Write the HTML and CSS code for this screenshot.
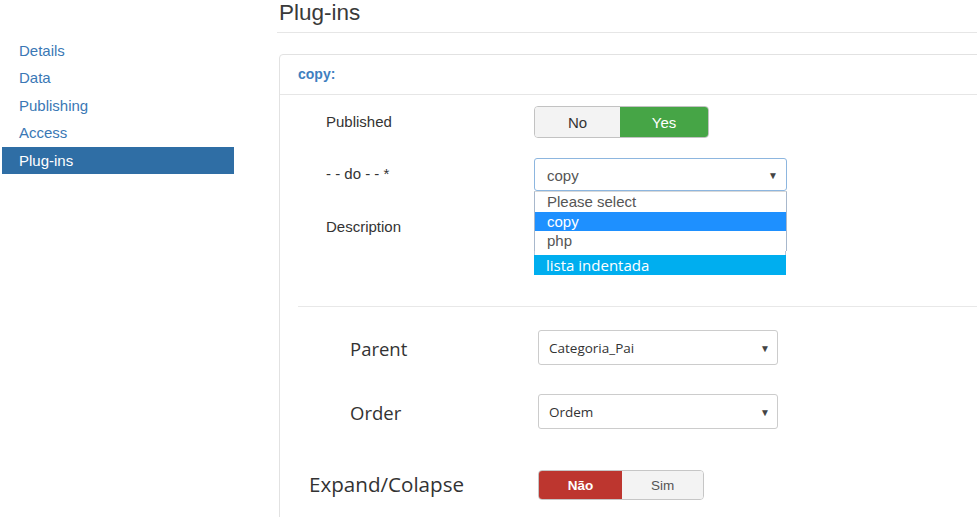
FILE: index.html
```html
<!DOCTYPE html>
<html>
<head>
<meta charset="utf-8">
<link rel="stylesheet" href="styles.css">
</head>
<body>
<div class="page">
  <aside class="sidebar">
    <ul class="nav">
      <li class="nav-item">Details</li>
      <li class="nav-item">Data</li>
      <li class="nav-item">Publishing</li>
      <li class="nav-item">Access</li>
      <li class="nav-item active">Plug-ins</li>
    </ul>
  </aside>
  <main class="main">
    <h1 class="title">Plug-ins</h1>
    <section class="panel">
      <div class="panel-head">copy:</div>
      <div class="panel-body">
        <div class="form">
          <div class="row">
            <div class="label">Published</div>
            <div class="toggle">
              <span class="tbtn off">No</span>
              <span class="tbtn yes">Yes</span>
            </div>
          </div>
          <div class="row">
            <div class="label">- - do - - *</div>
            <div class="select-wrap">
              <div class="select focus"><span>copy</span><span class="arrow">▼</span></div>
              <div class="dropdown">
                <div class="opt">Please select</div>
                <div class="opt sel">copy</div>
                <div class="opt">php</div>
                <div class="opt-gap"></div>
                <div class="note">lista indentada</div>
              </div>
            </div>
          </div>
          <div class="row desc">
            <div class="label">Description</div>
          </div>
        </div>
        <div class="sep"></div>
        <div class="form2">
          <div class="row2">
            <div class="label2">Parent</div>
            <div class="select2"><span>Categoria_Pai</span><span class="arrow">▼</span></div>
          </div>
          <div class="row2">
            <div class="label2">Order</div>
            <div class="select2"><span>Ordem</span><span class="arrow">▼</span></div>
          </div>
          <div class="row2 last">
            <div class="label2 wide">Expand/Colapse</div>
            <div class="toggle2">
              <span class="t2 nao">Não</span>
              <span class="t2 sim">Sim</span>
            </div>
          </div>
        </div>
      </div>
    </section>
  </main>
</div>
</body>
</html>
```

FILE: styles.css
```css
html, body {
  margin: 0;
  padding: 0;
  background: #fff;
  overflow: hidden;
}
body {
  font-family: "Liberation Sans", Arial, sans-serif;
  color: #333;
}
.page {
  display: grid;
  grid-template-columns: 232px 1fr;
  column-gap: 43px;
  padding-left: 2px;
  height: 517px;
  overflow: hidden;
}
.nav {
  list-style: none;
  margin: 36.5px 0 0 0;
  padding: 0;
}
.nav-item {
  height: 27.6px;
  line-height: 27.6px;
  padding-left: 17px;
  font-size: 15px;
  color: #3a78b5;
}
.nav-item.active {
  background: #2f6ea5;
  color: #fff;
}
.main {
  overflow: hidden;
  min-width: 0;
}
.title {
  margin: 0;
  height: 32px;
  line-height: 26px;
  font-size: 22.5px;
  font-weight: normal;
  color: #3a3a3a;
  border-bottom: 1px solid #e6e6e6;
  padding-left: 2px;
}
.panel {
  margin: 21px 0 0 2px;
  width: 760px;
  border: 1px solid #e2e2e2;
  border-radius: 4px;
  padding-bottom: 40px;
}
.panel-head {
  height: 39px;
  line-height: 39px;
  padding-left: 18px;
  font-size: 14px;
  font-weight: bold;
  color: #3f7fc0;
  border-bottom: 1px solid #e6e6e6;
}
.panel-body {
  padding: 11px 0 0 18px;
}
.form {
  padding-left: 28px;
}
.row {
  display: flex;
  align-items: flex-start;
  margin-bottom: 20px;
}
.row.desc {
  height: 75px;
}
.label {
  width: 208px;
  flex: none;
  font-size: 15px;
  line-height: 20px;
  padding-top: 6px;
  color: #333;
}
.toggle {
  display: flex;
  height: 32px;
  border: 1px solid #c2c2c2;
  border-radius: 4px;
  overflow: hidden;
  box-sizing: border-box;
}
.tbtn {
  display: flex;
  align-items: center;
  justify-content: center;
  font-size: 15px;
}
.tbtn.off {
  width: 85px;
  background: #f3f3f3;
  color: #333;
}
.tbtn.yes {
  width: 88px;
  background: #46a546;
  color: #fff;
}
.select-wrap {
  position: relative;
  width: 253px;
}
.select {
  box-sizing: border-box;
  height: 33px;
  border: 1px solid #8db6df;
  border-radius: 3px;
  display: flex;
  align-items: center;
  justify-content: space-between;
  padding: 2px 8px 0 12px;
  font-size: 15px;
  color: #555;
}
.arrow {
  font-size: 10px;
  color: #444;
}
.dropdown {
  position: absolute;
  left: 0;
  top: 33px;
  width: 253px;
  background: #fff;
  z-index: 2;
}
.opt {
  height: 19.6px;
  line-height: 19px;
  padding-left: 12px;
  font-size: 15px;
  color: #555;
  border-left: 1px solid #a8b8cc;
  border-right: 1px solid #a8b8cc;
}
.opt:first-child {
  border-top: 1px solid #d8d8d8;
}
.opt.sel {
  background: #1e90ff;
  color: #fff;
}
.opt-gap {
  height: 4px;
  border-left: 1px solid #b8c8dc;
  border-right: 1px solid #b8c8dc;
  margin-right: 1px;
}
.note {
  height: 20px;
  line-height: 20px;
  padding-left: 12px;
  background: #00aeef;
  color: #fff;
  font-family: "Open Sans", "Noto Sans", sans-serif;
  font-size: 15px;
  margin-right: 1px;
}
.sep {
  border-top: 1px solid #e8e8e8;
  margin-bottom: 23px;
}
.form2 {
  font-family: "Open Sans", "Noto Sans", sans-serif;
}
.row2 {
  display: flex;
  align-items: center;
  margin-bottom: 29px;
}
.row2.last {
  padding-top: 12px;
}
.label2 {
  width: 188px;
  padding-left: 52px;
  flex: none;
  font-size: 18.5px;
  color: #333;
  line-height: 24px;
  margin-top: 3px;
}
.label2.wide {
  padding-left: 11px;
  width: 229px;
  font-size: 20.6px;
  margin-top: -3px;
}
.select2 {
  box-sizing: border-box;
  width: 240px;
  height: 35px;
  border: 1px solid #ccc;
  border-radius: 3px;
  display: flex;
  align-items: center;
  justify-content: space-between;
  padding: 0 7px 0 10px;
  font-size: 13.5px;
  color: #333;
}
.toggle2 {
  display: flex;
  height: 30px;
  box-sizing: border-box;
  border: 1px solid #c6c6c6;
  border-radius: 4px;
  overflow: hidden;
  font-family: "Liberation Sans", Arial, sans-serif;
}
.t2 {
  display: flex;
  align-items: center;
  justify-content: center;
  font-size: 13.5px;
}
.t2.nao {
  width: 83px;
  background: #bd362f;
  color: #fff;
  font-weight: bold;
}
.t2.sim {
  width: 81px;
  background: #f3f3f3;
  color: #555;
}
```
